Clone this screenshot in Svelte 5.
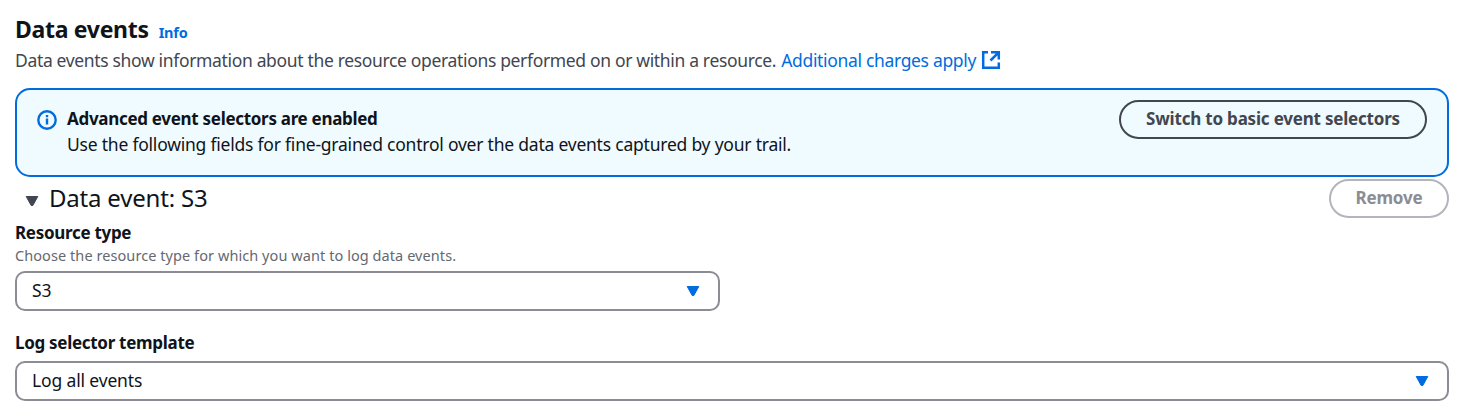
<script>
  let resourceType = $state('S3');
  let template = $state('Log all events');
</script>

<main>
  <header>
    <div class="heading">
      <h2>Data events</h2>
      <a class="info" href="#info">Info</a>
    </div>
    <p class="description">
      <span class="summary">Data events show information about the resource operations performed on or within a resource.</span>
      <a class="external" href="#pricing">
        <span>Additional charges apply</span>
        <svg width="20" height="20" viewBox="0 0 20 20" fill="none" stroke="currentColor" stroke-width="2.5" aria-hidden="true">
          <path d="M7 2.2H2.2v15.6h15.6V12.5M10 2.2h7.8V9.5M17.2 2.8L9.5 10.5" />
        </svg>
      </a>
    </p>
  </header>

  <section class="alert">
    <svg class="alert-icon" width="20" height="20" viewBox="0 0 20 20" fill="none" stroke="currentColor" stroke-width="2.4" aria-hidden="true">
      <circle cx="10" cy="10" r="8.7" />
      <path d="M10 5v2.2M10 8.4v6.1" />
    </svg>
    <div class="alert-copy">
      <strong>Advanced event selectors are enabled</strong>
      <span class="alert-body">Use the following fields for fine-grained control over the data events captured by your trail.</span>
    </div>
    <button class="switch"><span>Switch to basic event selectors</span></button>
  </section>

  <div class="event-row">
    <svg class="caret" width="14" height="12" viewBox="0 0 14 12" fill="currentColor" stroke="currentColor" stroke-linejoin="round" aria-hidden="true">
      <path d="M1.2 1.5h11.6L7.8 10.5H6.2z" />
    </svg>
    <h3>Data event: S3</h3>
    <button class="remove" disabled><span>Remove</span></button>
  </div>

  <div class="field resource">
    <span class="label">Resource type</span>
    <span class="hint">Choose the resource type for which you want to log data events.</span>
    <button class="select">
      <span class="value">{resourceType}</span>
      <svg width="14" height="12" viewBox="0 0 14 12" fill="currentColor" stroke="currentColor" stroke-linejoin="round" aria-hidden="true">
        <path d="M1.2 1.5h11.6L7.8 10.5H6.2z" />
      </svg>
    </button>
  </div>

  <div class="field template">
    <span class="label">Log selector template</span>
    <button class="select">
      <span class="value">{template}</span>
      <svg width="14" height="12" viewBox="0 0 14 12" fill="currentColor" stroke="currentColor" stroke-linejoin="round" aria-hidden="true">
        <path d="M1.2 1.5h11.6L7.8 10.5H6.2z" />
      </svg>
    </button>
  </div>
</main>

<style>
  :global(body) { margin: 0; background: #fff; }
  main {
    box-sizing: border-box;
    height: 419px;
    padding: 14px 16px 0 15px;
    color: #0f141a;
    font: 17.5px/25px "Noto Sans", "Open Sans", sans-serif;
    white-space: nowrap;
    overflow: hidden;
  }
  h2, h3, p { margin: 0; }
  a { color: #006ce0; text-decoration: none; }
  button { box-sizing: border-box; background: transparent; font: inherit; color: inherit; margin: 0; }
  svg { display: block; flex: none; }
  .heading { display: flex; align-items: baseline; gap: 10px; height: 31px; }
  h2 { font-size: 23px; line-height: 30px; font-weight: 700; letter-spacing: -0.3px; }
  .info { font-size: 14.5px; font-weight: 700; letter-spacing: -0.2px; }
  .description { display: flex; gap: 5px; height: 30px; line-height: 30px; color: #424650; }
  .summary { letter-spacing: -0.34px; }
  .external { display: flex; align-items: center; gap: 5px; letter-spacing: -0.33px; }
  .alert {
    box-sizing: border-box;
    display: flex;
    align-items: flex-start;
    height: 89px;
    margin-top: 13px;
    padding: 10px 20px;
    border: 2px solid #006ce0;
    border-radius: 15px;
    background: #f0fbff;
  }
  .alert-icon { margin: 10px 10px 0 0; color: #006ce0; }
  .alert-copy { display: flex; flex: 1; flex-direction: column; padding-top: 6px; }
  .alert-copy strong { font-size: 17px; letter-spacing: -0.3px; }
  .alert-body { padding-top: 1px; letter-spacing: -0.22px; }
  .switch, .remove {
    height: 39px;
    padding: 0 0 2px;
    border: 2px solid #424650;
    border-radius: 20px;
    color: #424650;
    font-size: 17px;
    font-weight: 700;
    line-height: 33px;
    letter-spacing: -0.2px;
  }
  .switch { width: 308px; }
  .remove { width: 120px; margin-left: auto; border-color: #b4b4bb; color: #8c8c94; }
  .event-row { display: flex; align-items: center; height: 39px; margin-top: 2px; padding-left: 10px; }
  .caret { margin: 5px 10px 0 0; color: #424650; }
  h3 { height: 38px; font-size: 24px; line-height: 36px; font-weight: 400; letter-spacing: -0.2px; }
  .field { display: flex; flex-direction: column; }
  .resource { width: 705px; margin-top: 2px; }
  .template { margin-top: 19px; }
  .label { font-size: 17px; font-weight: 700; letter-spacing: -0.3px; }
  .hint { height: 26px; color: #656871; font-size: 14.5px; line-height: 20px; letter-spacing: 0.07px; }
  .select {
    display: flex;
    align-items: center;
    justify-content: space-between;
    height: 40px;
    padding: 0 18px 0 15px;
    border: 2px solid #8c8c94;
    border-radius: 10px;
    text-align: left;
    line-height: 30px;
    letter-spacing: -0.15px;
  }
  .value { padding-bottom: 3px; }
  .select svg { color: #006ce0; }
  .template .select { margin-top: 6px; }
</style>
